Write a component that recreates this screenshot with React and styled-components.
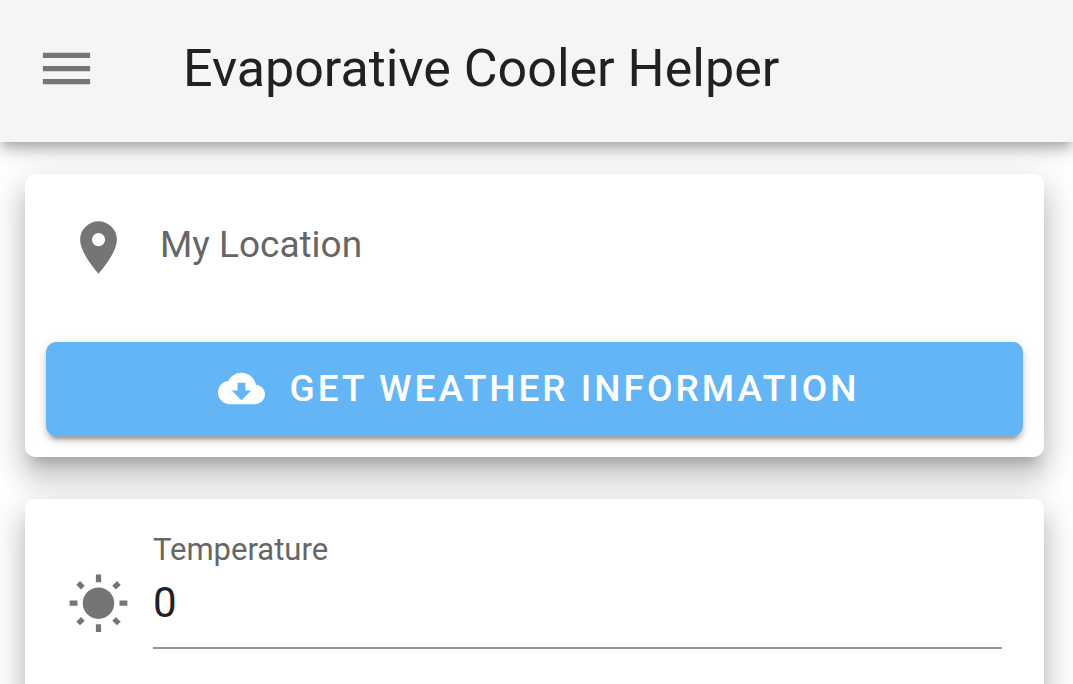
import React, { useState } from "react";
import styled, { createGlobalStyle } from "styled-components";

const GlobalStyle = createGlobalStyle`
  * { box-sizing: border-box; }
  body {
    margin: 0;
    background: #fff;
    color: #212121;
    font-family: Roboto, "Liberation Sans", sans-serif;
  }
`;

const Page = styled.div`
  display: flex;
  flex-direction: column;
  height: 100vh;
  overflow: hidden;
`;

const AppBar = styled.header`
  position: relative;
  z-index: 1;
  flex: none;
  display: flex;
  align-items: center;
  gap: 85px;
  height: 142px;
  padding: 0 35px;
  padding-bottom: 5px;
  background: #f5f5f5;
  box-shadow:
    0 5px 10px -3px rgba(0, 0, 0, 0.2),
    0 10px 13px 0 rgba(0, 0, 0, 0.14),
    0 3px 26px 0 rgba(0, 0, 0, 0.12);
`;

const IconButton = styled.button`
  display: flex;
  padding: 0;
  border: 0;
  background: none;
  color: #757575;
  cursor: pointer;
`;

const Title = styled.h1`
  margin: 0;
  font-size: 52px;
  line-height: 64px;
  font-weight: 400;
  white-space: nowrap;
`;

const Icon = styled.svg`
  display: block;
  flex: none;
  width: ${(p) => p.$size || 63}px;
  height: ${(p) => p.$size || 63}px;
  fill: currentColor;
`;

const Content = styled.main`
  flex: 1;
  display: flex;
  flex-direction: column;
  gap: 42px;
  padding: 32px 29px 42px 25px;
  overflow-y: auto;
  scrollbar-width: none;
`;

const Card = styled.section`
  flex: none;
  padding: 21px;
  border-radius: 10px;
  background: #fff;
  box-shadow:
    0 13px 13px -8px rgba(0, 0, 0, 0.2),
    0 21px 26px 3px rgba(0, 0, 0, 0.14),
    0 8px 37px 5px rgba(0, 0, 0, 0.12);
`;

const ListItem = styled.div`
  display: flex;
  align-items: center;
  gap: 30px;
  height: 105px;
  padding: 0 21px;
  margin-bottom: 42px;
  color: #757575;
`;

const ItemText = styled.span`
  padding-bottom: 6px;
  font-size: 37px;
  line-height: 48px;
  color: #666;
`;

const PrimaryButton = styled.button`
  display: flex;
  align-items: center;
  justify-content: center;
  gap: 25px;
  width: 100%;
  height: 94px;
  padding: 0 0 2px 8px;
  border: 0;
  border-radius: 10px;
  background: #64b5f6;
  color: #fff;
  font-family: inherit;
  font-size: 37px;
  font-weight: 500;
  letter-spacing: 3px;
  text-transform: uppercase;
  cursor: pointer;
  box-shadow:
    0 8px 3px -5px rgba(0, 0, 0, 0.2),
    0 5px 5px 0 rgba(0, 0, 0, 0.14),
    0 3px 13px 0 rgba(0, 0, 0, 0.12);
`;

const Field = styled.div`
  display: flex;
  align-items: flex-end;
  gap: 23px;
  padding: 12px 21px 84px;
  color: #757575;
`;

const FieldIcon = styled.div`
  padding-bottom: 13px;
`;

const FieldBody = styled.div`
  flex: 1;
  display: flex;
  flex-direction: column;
  min-width: 0;
`;

const Label = styled.label`
  font-size: 31px;
  line-height: 36px;
  color: #666;
`;

const Input = styled.input`
  width: 100%;
  height: 81px;
  padding: 0 0 10px;
  border: 0;
  border-bottom: 2px solid #949494;
  border-radius: 0;
  outline: 0;
  background: transparent;
  color: #212121;
  font-family: inherit;
  font-size: 42px;
`;

const MENU = "M3,6H21V8H3V6M3,11H21V13H3V11M3,16H21V18H3V16Z";
const MARKER =
  "M12,11.5A2.5,2.5 0 0,1 9.5,9A2.5,2.5 0 0,1 12,6.5A2.5,2.5 0 0,1 14.5,9A2.5,2.5 0 0,1 12,11.5M12,2A7,7 0 0,0 5,9C5,14.25 12,22 12,22C12,22 19,14.25 19,9A7,7 0 0,0 12,2Z";
const CLOUD =
  "M17,13L12,18L7,13H10V9H14V13M19.35,10.03C18.67,6.59 15.64,4 12,4C9.11,4 6.6,5.64 5.35,8.03C2.34,8.36 0,10.9 0,14A6,6 0 0,0 6,20H19A5,5 0 0,0 24,15C24,12.36 21.95,10.22 19.35,10.03Z";
const SUN =
  "M3.55,18.54L4.96,19.95L6.76,18.16L5.34,16.74M11,22.45C11.32,22.45 13,22.45 13,22.45V19.5H11M12,5.5A6,6 0 0,0 6,11.5A6,6 0 0,0 12,17.5A6,6 0 0,0 18,11.5C18,8.18 15.31,5.5 12,5.5M20,12.5H23V10.5H20M17.24,18.16L19.04,19.95L20.45,18.54L18.66,16.74M20.45,4.46L19.04,3.05L17.24,4.84L18.66,6.26M13,0.55H11V3.5H13M4,10.5H1V12.5H4M6.76,4.84L4.96,3.05L3.55,4.46L5.34,6.26L6.76,4.84Z";

function Glyph({ d, size }) {
  return (
    <Icon viewBox="0 0 24 24" $size={size} aria-hidden="true">
      <path d={d} />
    </Icon>
  );
}

export default function App() {
  const [temperature, setTemperature] = useState("0");
  return (
    <Page>
      <GlobalStyle />
      <AppBar>
        <IconButton type="button" aria-label="Menu">
          <Glyph d={MENU} />
        </IconButton>
        <Title>Evaporative Cooler Helper</Title>
      </AppBar>
      <Content>
        <Card>
          <ListItem>
            <Glyph d={MARKER} />
            <ItemText>My Location</ItemText>
          </ListItem>
          <PrimaryButton type="button">
            <Glyph d={CLOUD} size={47} />
            Get Weather Information
          </PrimaryButton>
        </Card>
        <Card>
          <Field>
            <FieldIcon>
              <Glyph d={SUN} />
            </FieldIcon>
            <FieldBody>
              <Label htmlFor="temperature">Temperature</Label>
              <Input
                id="temperature"
                inputMode="decimal"
                value={temperature}
                onChange={(e) => setTemperature(e.target.value)}
              />
            </FieldBody>
          </Field>
        </Card>
      </Content>
    </Page>
  );
}
